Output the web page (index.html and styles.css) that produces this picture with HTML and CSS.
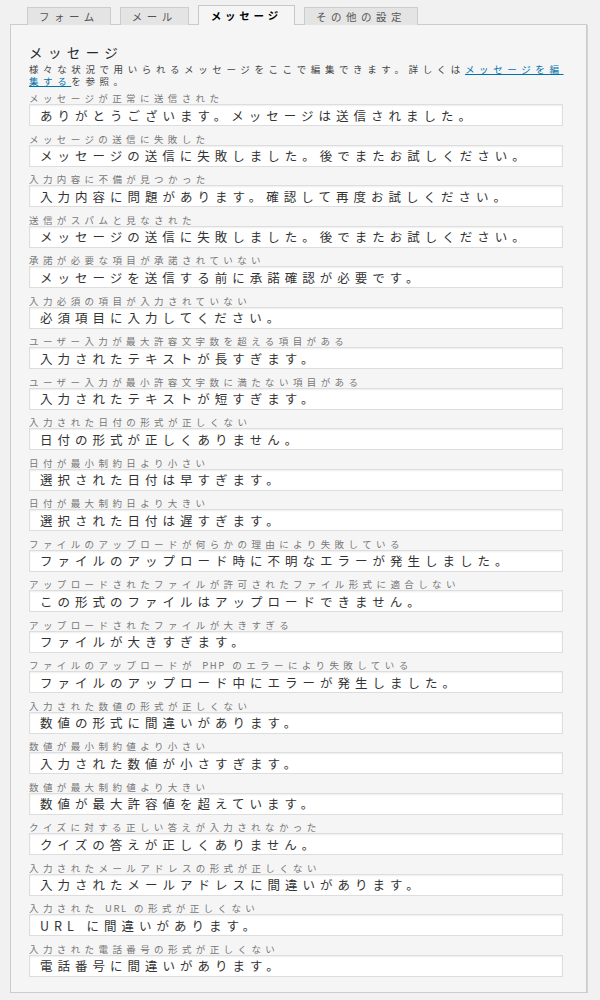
FILE: index.html
```html
<!DOCTYPE html>
<html>
<head>
    <title>メッセージ設定</title>
    <meta charset="utf-8">
    <link rel="stylesheet" href="styles.css">
</head>
<body>
    <div class="wrap">
        <div class="tabs">
            <span class="tab">フォーム</span>
            <span class="tab">メール</span>
            <span class="tab active">メッセージ</span>
            <span class="tab">その他の設定</span>
        </div>

        <div class="panel">
            <h2>メッセージ</h2>
            <p class="desc">様々な状況で用いられるメッセージをここで編集できます。詳しくは<a href="#">メッセージを編集する</a>を参照。</p>

            <div class="fields">
                <div class="field">
                    <label for="m1">メッセージが正常に送信された</label>
                    <input type="text" id="m1" value="ありがとうございます。メッセージは送信されました。">
                </div>
                <div class="field">
                    <label for="m2">メッセージの送信に失敗した</label>
                    <input type="text" id="m2" value="メッセージの送信に失敗しました。後でまたお試しください。">
                </div>
                <div class="field">
                    <label for="m3">入力内容に不備が見つかった</label>
                    <input type="text" id="m3" value="入力内容に問題があります。確認して再度お試しください。">
                </div>
                <div class="field">
                    <label for="m4">送信がスパムと見なされた</label>
                    <input type="text" id="m4" value="メッセージの送信に失敗しました。後でまたお試しください。">
                </div>
                <div class="field">
                    <label for="m5">承諾が必要な項目が承諾されていない</label>
                    <input type="text" id="m5" value="メッセージを送信する前に承諾確認が必要です。">
                </div>
                <div class="field">
                    <label for="m6">入力必須の項目が入力されていない</label>
                    <input type="text" id="m6" value="必須項目に入力してください。">
                </div>
                <div class="field">
                    <label for="m7">ユーザー入力が最大許容文字数を超える項目がある</label>
                    <input type="text" id="m7" value="入力されたテキストが長すぎます。">
                </div>
                <div class="field">
                    <label for="m8">ユーザー入力が最小許容文字数に満たない項目がある</label>
                    <input type="text" id="m8" value="入力されたテキストが短すぎます。">
                </div>
                <div class="field">
                    <label for="m9">入力された日付の形式が正しくない</label>
                    <input type="text" id="m9" value="日付の形式が正しくありません。">
                </div>
                <div class="field">
                    <label for="m10">日付が最小制約日より小さい</label>
                    <input type="text" id="m10" value="選択された日付は早すぎます。">
                </div>
                <div class="field">
                    <label for="m11">日付が最大制約日より大きい</label>
                    <input type="text" id="m11" value="選択された日付は遅すぎます。">
                </div>
                <div class="field">
                    <label for="m12">ファイルのアップロードが何らかの理由により失敗している</label>
                    <input type="text" id="m12" value="ファイルのアップロード時に不明なエラーが発生しました。">
                </div>
                <div class="field">
                    <label for="m13">アップロードされたファイルが許可されたファイル形式に適合しない</label>
                    <input type="text" id="m13" value="この形式のファイルはアップロードできません。">
                </div>
                <div class="field">
                    <label for="m14">アップロードされたファイルが大きすぎる</label>
                    <input type="text" id="m14" value="ファイルが大きすぎます。">
                </div>
                <div class="field">
                    <label for="m15">ファイルのアップロードが <span class="latin">PHP</span> のエラーにより失敗している</label>
                    <input type="text" id="m15" value="ファイルのアップロード中にエラーが発生しました。">
                </div>
                <div class="field">
                    <label for="m16">入力された数値の形式が正しくない</label>
                    <input type="text" id="m16" value="数値の形式に間違いがあります。">
                </div>
                <div class="field">
                    <label for="m17">数値が最小制約値より小さい</label>
                    <input type="text" id="m17" value="入力された数値が小さすぎます。">
                </div>
                <div class="field">
                    <label for="m18">数値が最大制約値より大きい</label>
                    <input type="text" id="m18" value="数値が最大許容値を超えています。">
                </div>
                <div class="field">
                    <label for="m19">クイズに対する正しい答えが入力されなかった</label>
                    <input type="text" id="m19" value="クイズの答えが正しくありません。">
                </div>
                <div class="field">
                    <label for="m20">入力されたメールアドレスの形式が正しくない</label>
                    <input type="text" id="m20" value="入力されたメールアドレスに間違いがあります。">
                </div>
                <div class="field">
                    <label for="m21">入力された <span class="latin">URL</span> の形式が正しくない</label>
                    <input type="text" id="m21" value="URL に間違いがあります。">
                </div>
                <div class="field">
                    <label for="m22">入力された電話番号の形式が正しくない</label>
                    <input type="text" id="m22" value="電話番号に間違いがあります。">
                </div>
            </div>
        </div>
    </div>
</body>
</html>
```

FILE: styles.css
```css
body { margin: 0; background: #f1f1f1; font-family: "Noto Sans CJK JP", "Noto Sans", sans-serif; color: #444; }
.wrap { padding: 5px 13px 0 10px; }

/* tabs */
.tabs { display: flex; align-items: flex-end; gap: 9px; padding-left: 17px; margin-bottom: -1px; }
.tab { position: relative; z-index: 1; height: 17px; line-height: 17px; padding: 0 11px; border: 1px solid #ccc; border-bottom: 0; background: #e4e4e4; color: #555; font-size: 10.5px; letter-spacing: 4.5px; }
.tab.active { height: 19px; line-height: 19px; padding: 0 12px; background: #f5f5f5; color: #000; font-weight: bold; letter-spacing: 3.8px; border-color: #c8c8c8; }

/* panel */
.panel { background: #f5f5f5; border: 1px solid #ccc; box-shadow: 1px 1px 0 #d4d4d4; padding: 19px 13px 15px 18px; }
.panel h2 { margin: 0 0 3px; font-size: 13.5px; line-height: 16px; font-weight: normal; color: #23282d; letter-spacing: 5.4px; }
.desc { margin: 0 0 5px; font-size: 9.5px; line-height: 12px; color: #444; letter-spacing: 4.6px; }
.desc a { color: #0073aa; }

.fields { display: flex; flex-direction: column; gap: 6.5px; }
.field label { display: block; height: 12px; font-size: 9.5px; line-height: 12px; color: #777; letter-spacing: 4.4px; white-space: nowrap; }
.field .latin { letter-spacing: 1.5px; }
.field input { display: block; box-sizing: border-box; width: 534px; height: 22px; margin: 0; padding: 0 10px; border: 1px solid #ddd; box-shadow: inset 0 1px 2px rgba(0, 0, 0, 0.07); background: #fff; font-family: "Noto Sans CJK JP", "Noto Sans", sans-serif; font-size: 12.5px; color: #333; letter-spacing: 5px; outline: none; }
```
